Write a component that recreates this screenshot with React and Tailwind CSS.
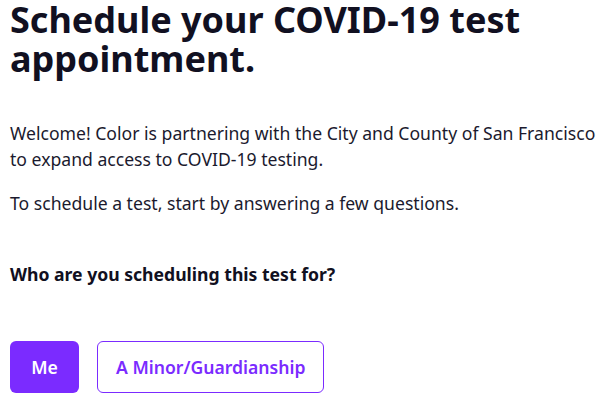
import React from 'react';

const App = () => {
  return (
    <div className="min-h-screen bg-white px-[10px] text-[#111021]" style={{ fontFamily: '"Noto Sans", sans-serif' }}>
      <h1 className="text-[36px] font-bold leading-[39px]">
        Schedule your COVID-19 test appointment.
      </h1>
      <p className="mt-[42px] text-[17.6px] leading-[26px] text-[#1b1a2e]">
        Welcome! Color is partnering with the City and County of San Francisco to expand access to COVID-19 testing.
      </p>
      <p className="mt-[18px] text-[17.6px] leading-[26px] text-[#1b1a2e]">
        To schedule a test, start by answering a few questions.
      </p>
      <h2 className="mt-[45px] text-[17.6px] font-bold leading-[26px]">
        Who are you scheduling this test for?
      </h2>
      <div className="mt-[54px] flex gap-[18px]">
        <button className="h-[52px] w-[69px] rounded-[6px] bg-[#7b2bff] text-[17.6px] font-semibold text-white">
          Me
        </button>
        <button className="h-[52px] rounded-[6px] border border-[#7b2bff] bg-white px-[18px] text-[17.6px] font-semibold text-[#7b2bff]">
          A Minor/Guardianship
        </button>
      </div>
    </div>
  );
};

export default App;
